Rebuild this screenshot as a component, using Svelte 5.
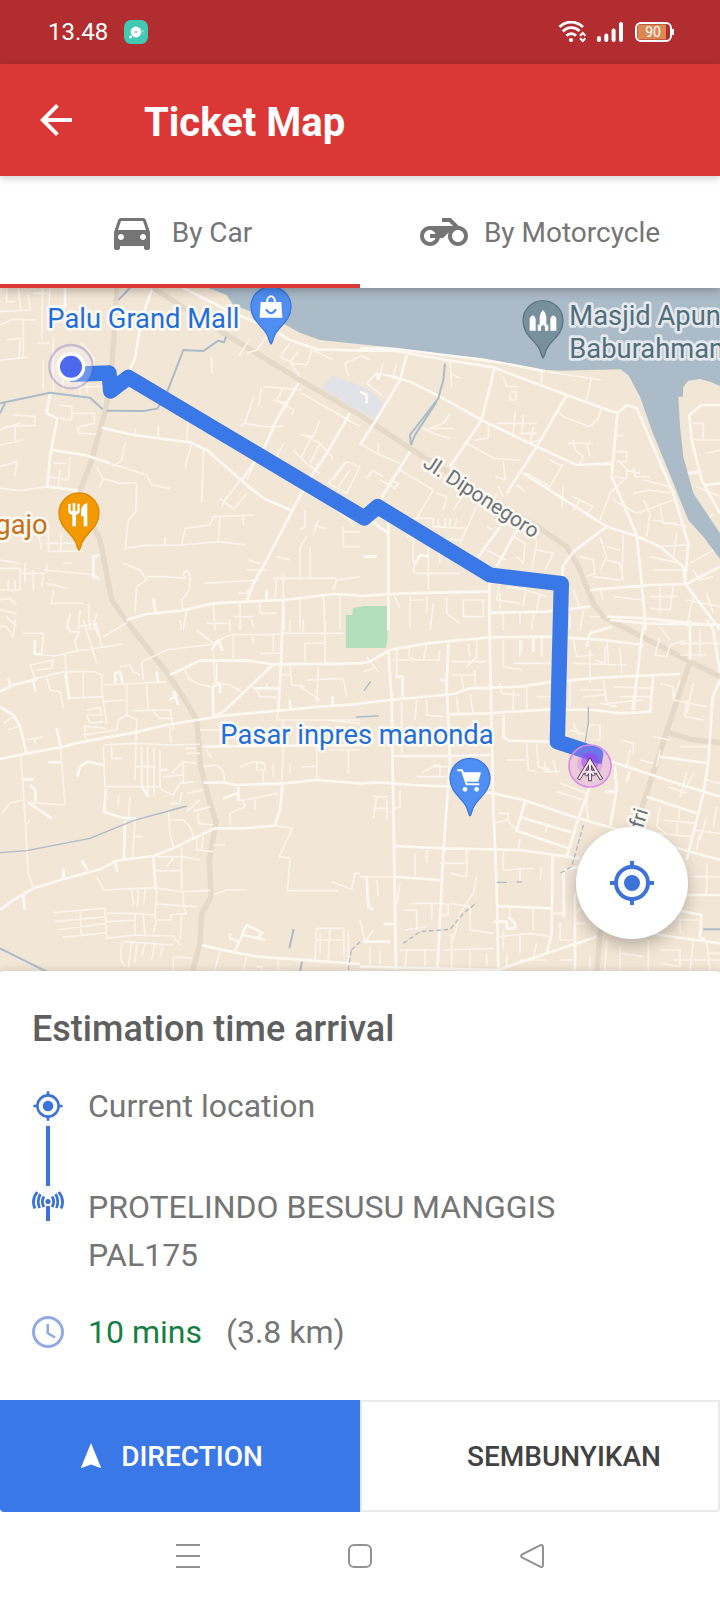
<script lang="ts">
	type Mode = 'car' | 'motorcycle';

	let mode: Mode = $state('car');

	const pin = 'M0 112C-5 108-5 97-11 85C-25 57-60 42-60 0A60 60 0 0 1 60 0C60 42 25 57 11 85C5 97 5 108 0 112Z';
	const target = 'M12 8a4 4 0 1 0 0 8 4 4 0 0 0 0-8zm8.94 3A8.99 8.99 0 0 0 13 3.06V1h-2v2.06A8.99 8.99 0 0 0 3.06 11H1v2h2.06A8.99 8.99 0 0 0 11 20.94V23h2v-2.06A8.99 8.99 0 0 0 20.94 13H23v-2h-2.06zM12 19a7 7 0 1 1 0-14 7 7 0 0 1 0 14z';

	// street network, one entry per map tile
	const tiles = [
		{
			x: 0,
			y: 0,
			roads: 'M455 30L425 115L405 235L385 280M550 24L690 95L800 140L870 180L950 208L1080 212M150 340L140 400L172 415L150 530L142 620L235 632M155 510L255 525L330 550M305 443L400 465L570 487L620 510L720 597L790 655L877 692M895 310L830 420L790 510L727 597M1050 400L980 520L920 610L877 692L800 840L760 910L740 965M380 1020L440 1002L545 992L640 970L740 965L850 960L1000 942L1080 947M850 960V1050M300 825L280 830V890L298 895M460 955L467 1000M800 930V960M195 24V80H160',
			lanes: 'M20 24V65H45M0 95L90 90L85 45M55 24L62 90M100 40H150M128 24L125 175M150 24L145 120M0 135L40 118L110 120M20 180L60 175L58 235M70 120V230M0 240L85 232M110 190H150M130 240V330M160 170V335M190 330V300M240 300V355M262 310V340M245 190L282 235L280 260M225 320H330M40 405L105 410V437H70L15 440M0 450L60 430M45 440V490M0 495L70 480M0 560L50 545L45 590M0 625L60 632L142 620M175 375L215 380V420L180 415M215 400L283 400V430L235 440V460L290 462M160 550H200M180 570L175 625M210 530L205 600M140 590L205 600M330 550L440 585L455 615L510 625M310 595L360 610L410 608M375 490L365 540L340 560M290 560L310 600L295 625M405 445V465M475 435V475M565 400L560 487M575 490L555 565M610 510L605 670M635 230V280M640 410V435M410 610L408 695L385 720L375 810M375 805L430 797L545 795L655 785M495 770V795M545 795L555 745L630 735L640 710L760 705M660 710L655 785L740 795M730 710V735M750 175L715 230M800 170L770 210L740 220M870 190L840 230L880 250L920 255L935 215M895 215L870 245L900 290M1080 230L1035 250L1045 290M1000 240L950 215L930 210M790 320L850 325L905 330M785 320L775 380M850 325L830 360L880 390L875 405M905 340L1080 440M760 350L735 430L720 440M735 430L790 440L850 440M865 370L820 360M960 420L940 470L900 465M910 465L960 490L1000 535M880 510L920 550L960 580M850 490L830 530L860 560M935 470L905 530M960 490L930 550M1035 545L985 610L1040 640L1080 560L1040 545L1000 600M1050 570L1015 620M920 640L980 670L1050 720L1060 740M915 690V740L900 750M955 720L940 765M940 735L975 745M1030 740V800H1080M1025 755H1080M920 770L900 800V890M930 800V890M870 840L830 830M745 840L780 850M740 870H800M1000 930L1010 900L1080 890M820 895H1010M850 880V960M830 890L825 960M610 910L780 900M770 900L740 940M715 940H745M660 655L705 690M680 650L665 680M740 640L700 690M720 600L670 670M770 640L740 620M760 560L740 600M145 740V815M185 760L180 815M150 815L250 812M110 740L125 810M140 790H255M190 850H215M0 865H60V930H0M75 850V910M100 870V930M60 880H130L125 920M25 900V930M45 900V930M0 840L60 850M130 870L290 885M140 850V880M140 910L200 925M160 930L155 970M150 970H250M210 1000L200 1050M240 990L235 1050M265 970L270 1050M290 1000L280 1050M370 850L420 870L440 900L410 920L405 1000M440 890H500L555 895L550 880L560 872L570 885L568 930L545 960L548 990M560 990L550 1050M640 970L645 1050M720 970V1050M780 965V1000M900 955V1050M970 945L975 1050M1020 950V1050M780 1000H830M700 1010H760M620 1030H690M0 960L30 955L50 975M0 990L50 1000M20 1010L50 1040'
		},
		{
			x: 1080,
			y: 0,
			roads: 'M0 212L100 212L260 240L400 262L500 300L620 345L772 400M0 205L100 205L260 225L440 250L555 275M140 225L120 300L45 425L0 495M80 285L150 305L240 350L365 420L530 500L650 555L755 550M405 260L365 420L270 560M620 345L530 500L440 640M470 750L410 860M355 830L420 740M150 515L60 660M772 400L755 590L830 765L850 960L857 1050M772 400L800 375L830 385L940 640L985 790L975 910L1080 1050M490 580L740 740L830 768L900 800L970 860L975 910M740 740L640 815L608 860V890M690 930L870 915L980 912L1080 860M390 998L560 995L690 980M0 948L130 940L385 935M85 730V1050M388 905V1050M1080 375H1025L988 405L995 480L1025 600L1080 700M980 580L1025 575M1040 615L1080 610M740 1010L860 1015L1000 1030L1080 1035M0 335L20 345V370M50 275L55 300M30 720L85 760M10 830H50M165 850L180 825L205 830',
			lanes: 'M30 240L0 225M20 310L50 280L100 290L110 250M70 250L55 300M20 310L70 350M270 245L275 320M270 280L300 295M430 290L440 320H475M450 340V360H468V335H450M545 275V310M560 275L725 300M695 290L680 360M590 390L610 410L690 440L715 415L725 380M465 395L460 460M410 430H530M490 405L485 460L530 460M520 440L510 490L535 480M625 490H700M640 480L645 510L670 530L660 550M680 490L690 530M570 540L610 560M610 550L570 620L500 580M270 400L250 430L210 445H280M180 440L220 460L270 475M320 490L400 535L480 540M430 545L435 600L405 590M385 430V475L345 480M0 490L50 520L120 550M55 490V520M40 570L20 595M35 570L70 590M120 570L220 630L170 715M90 600L115 610L105 625L60 600M230 640L260 650L250 690M300 660L280 690M350 680L300 790M410 640L390 700M415 620L430 650M470 615L495 635M145 715H220V740L320 745M235 715V745M255 715V745M270 715V745M290 715L285 745M140 770L310 780M160 730V850M205 790V930M165 850L160 880M235 790L240 850M160 880H300M380 740L400 750M380 810L440 840M460 770L495 790L490 850L470 830M520 760L530 790L515 870M530 810L580 820L555 870M610 620L605 680M640 650L700 680L680 700M660 660L640 690M720 720L750 640L790 600M760 590L800 595V570L780 545M770 515H800V545H770M790 465L760 470M800 570L840 580M820 560L825 590H870M820 640L870 630L930 640M850 600L930 620M760 660L830 700L940 660M850 660L870 700M880 720L980 740M900 680L910 730L950 730M860 770L870 700M890 800L980 795M950 760L940 830M790 765L785 900M720 770L740 830L720 870M660 830L700 840L705 880L680 890M740 800L780 810M870 830L960 850M880 870L970 870M740 840L780 850L790 900M700 890L780 900M1000 430H1030V480M1000 480H1080M1040 520L1080 510M1010 620L1080 650M1020 750L1060 700M990 850L1080 800M1000 870L1020 905M1020 900L1060 890M640 930L660 980M720 930L730 960M760 950L850 960M870 950H950M900 920V1000M940 920L930 990L870 985M980 960L1080 980M1000 950L980 1040M1040 940L1060 1000M420 900L410 960L480 970M440 920L500 930L560 950M500 900L490 980M540 940L530 990M420 940V990M310 960H370V1010H310ZM200 1000V950M260 950V1000L300 1030M100 940L120 985M150 950V1040M150 960H190M220 970L210 1050M430 1000V1050M480 1000V1030M520 1000L515 1050M630 1000V1050M670 990L660 1050M690 1010H720'
		},
		{
			x: 0,
			y: 1020,
			roads: 'M510 165L600 122L745 122L820 133L950 132L1080 130M848 0L843 130L835 270M820 133L670 275L640 290M0 417L80 400L180 382L240 367L400 338L500 315L590 300L680 286L835 272L960 260L1080 252M0 260L40 285L60 320L80 400M0 215L40 195L110 178M640 290L638 200L660 190V220M610 380L760 378L1080 375M610 488H680L705 495L850 490L950 480L1080 490M848 490L840 570L825 617L730 625L645 625L590 650L520 685L460 708L350 722L300 748L200 775L100 805L40 840L0 870M318 505L312 575L360 592L410 597M375 600L372 715M460 710L467 810M605 975L660 988L770 1010L940 1022L1080 1032M105 60L104 102H125M345 190V160L360 155L368 190M635 90L655 60L668 92M196 160L208 235M170 325L182 382M232 470L240 440L262 425L310 435M85 548L155 595M90 495L106 510V545M425 500L447 530M480 450H502M508 240L530 225L520 215L535 255M760 205H835M715 500V540H730M670 535L715 518M706 990L740 915L787 938L770 955M728 945L797 960M690 940V955L715 965M190 745V775M245 720L262 750M345 722L352 755M70 825L74 870M145 427H182M65 478H100M25 175L32 200M100 180L106 215M470 155L475 190M868 240L872 270M998 230V255',
			lanes: 'M70 40H130L125 105L165 108L220 95L370 72M90 135L105 175L195 155L285 155L305 165V210L320 310M90 135L160 120L155 145L110 150M195 100L205 235L310 230M250 160V235M140 170L150 210L180 215L190 265M200 0L210 35H240L225 60L230 90M240 20L290 10L305 80M250 0L290 130M280 0L295 50M380 8L310 50M430 180L425 125L500 90L640 72M360 140L390 135L400 155L420 165M310 195L380 192L500 185M380 195V285L410 300L405 480M440 195L445 270M305 245L380 240M400 272L515 270M510 270L520 330M455 270L480 295H520M260 270L300 262L305 285H260L270 310L310 305M250 318L320 325M250 345L350 330L355 300L380 285M255 320V355M555 150L565 175L590 190L630 200M660 190L690 195L730 218M640 100L645 190M590 30L640 70L690 45L850 42M700 40V115M755 40L760 70M820 40V95M780 100H840M690 0V35M755 0L760 20M540 0L545 30M850 40H1030M870 0V40M910 0V35M975 0V130M915 130V70H975M870 135L875 195L915 200M848 165H875M920 180L1030 175M1030 175L1040 230M900 200L960 240M955 140L950 250M770 210L780 230L830 232M800 190V205M650 130V190M600 330H660M835 275L830 300H1080M850 300L845 375M980 300L1080 310M10 310L40 290M25 330L55 320M80 360L130 350M105 355V370M62 410L68 480L80 680L85 760L100 805M75 615L90 600M182 385L195 555L85 548M5 580L30 550L65 540M310 380L315 500L480 500M335 370V415H365M310 375L400 370L515 375L600 372M405 440H465M425 380V500M443 380V525M462 380V530M480 390V500M510 320L512 370M480 500L485 510L520 525L540 490L550 485V425L590 430M515 460L550 425M490 470L550 465M560 400H600M555 385H590M545 490L580 485M560 520L610 510M580 575L630 560M560 575L600 540M595 580V610L640 615M505 570L510 640L520 680M505 600H550L570 620L580 650M510 550L540 550L545 515M620 390L635 415M610 440L650 435L670 455L675 485M720 440L760 425L795 430V450H770V425M790 450V495M850 380L845 490M820 430V470M870 430V460M905 440H950V380M950 440V480M985 390H1080M1045 390V460M690 615V580L735 560L728 540M735 540L835 520M765 540V570M830 617L877 625L838 710L870 715L862 812H1015M995 785L1055 808L1065 760H1080M640 825L680 810H740M640 675H675M590 650V690L640 695M610 650L605 690M545 680L545 810M460 752H545M470 710H545L600 720M500 740L520 715M398 715L405 600M355 525V560M390 530L385 600M400 650H430M290 770L310 810L460 803L545 815L632 812M395 805L400 855M415 805L412 860M435 805L432 850M470 810L465 900M470 852L590 860M550 815V860L560 880L510 885L515 900H470M160 877L315 865L320 955L405 945V880L320 880M165 905L320 890M170 930L320 910M188 952L320 938M240 875L245 950M320 905L405 900M405 880L465 885M430 885L435 950M405 945L520 948L540 975M545 885L540 960M365 965L362 1020L375 1040M370 965L520 975M395 965L385 1040M410 970L405 1030M435 970L425 1010M465 970L455 1020M490 970L480 1010M525 1010L575 1015M520 1010V1050M460 940L470 900M945 1020L950 925H1032V1010M990 925L985 1018M960 940V1000M950 960H1030M1045 930V1030M660 990L645 1050M740 1010L730 1050M770 1040H785V1050M835 1015V1050M20 20L40 50L45 0M0 20H20'
		},
		{
			x: 1080,
			y: 1020,
			roads: 'M0 130L30 125L90 90L200 70L390 52L570 50L730 60L850 75M0 250L90 240L280 222L330 205L480 200L580 185L730 172L960 162M85 90L95 240L100 560L108 1050M388 0L400 560L410 800L415 1050M265 70L260 200L270 420L250 700L232 1050M270 283L380 280L570 268L700 270L780 280L870 275L880 165M432 285L430 350L445 362L570 365M95 408L270 408L390 405M0 490L60 487L160 495L270 500L400 520L490 540L640 590L760 625L900 670L1080 720M755 425L860 460L950 490L1080 530M100 678L250 685L480 690L660 715M690 500L650 610L622 705M495 545L470 632L625 685M482 592L633 637M680 80L690 40L755 20M855 0L845 50L820 270M800 485L810 455M765 440L770 510L750 620M860 530L1010 580M900 410L1045 430M1080 180L1058 230L1045 430L1030 520L980 720M1040 0L1060 30L1080 160M750 0L860 10L1060 15M990 0V120M0 1040L220 1045L415 1050L560 1000L710 950M610 750L660 740M610 750L612 890M578 705L575 940L560 1000M410 858L575 865M100 770L240 780M735 515H765M645 820V1050M845 930L900 945L1080 970M20 770L25 860L40 870M400 905H440V925H465V905M70 912H105M10 965H90M920 865L1025 885L1020 950L1035 960M980 825H1080M105 170H128V230M240 180H258V195M520 50V95M445 890L465 910',
			lanes: 'M20 110L55 155M10 155L40 145M95 120H240M110 80V165M150 80L145 110L170 120M200 75L190 120M240 90L235 125M275 125H380M325 70L330 110M350 60V110L320 140M345 150V205M305 165L310 210M275 165H350M290 230L295 280M330 225L340 280M200 240V285L250 290M125 245V400M170 240L165 300M100 330L165 335M430 60V140L485 150M460 130H570M485 60V95M545 55V110M480 110V60M420 190L425 220L480 225M500 200V270M460 210V270M530 230H570M640 60L650 110L700 105M640 130L800 135M740 60L745 130M705 120L735 130V80M780 80L785 160M690 90V190M630 180V260M730 180L740 250L850 240M830 165L815 270M660 210H730M670 230L740 225M720 250L770 260M760 200L880 205M780 230H880M900 50L885 105L920 110L930 75L980 60M900 190L940 200V240L1040 260M980 240L975 290L1030 300M1000 190L980 280M940 240L960 180M960 70L1080 70M960 105H1040M1020 30V110M900 20L930 60M630 330L680 345L690 315H720V360H700M640 310L660 350M500 370L505 450L530 455M530 370L535 440L570 450M440 420H500M580 420L590 460M555 425V455H600M220 435H240V470M190 455L220 440H265M170 470H260M300 430V500M340 410V490M600 490L680 520M590 515L670 540M680 520V560L685 600M120 510V560L105 565M50 530L40 595M40 530H85M40 565H85M80 540V600M400 610L440 600L470 630M415 580H445V605M560 610L558 635M480 655L475 690M840 420L880 430M880 350L930 360M810 390L800 440M780 360L820 370V400M960 380H1045M900 390L890 440M980 455L960 530M1000 460L975 510M925 500L980 520M1040 480L1080 490M900 560L890 620L920 640M910 600L1010 610M960 560L950 640M1000 630L1080 640M1040 590L1020 660M1070 560L1060 620M1020 640L1010 690M890 640L1000 650M200 690V730M165 700V770M320 690V770L270 760M240 730H320M430 690V750L520 745M545 740L540 780M480 740V790M350 770L340 820L300 880L280 960M0 770H100M50 780L55 830M150 850L240 850M130 870H170V930M135 930L200 920M245 850L265 855V885H245M270 850L330 860V930L400 940M215 850V900M450 860V900M520 865V930M415 950L510 940L575 950M430 930V990M480 940V1000M530 970L520 1010M0 900L15 965L40 930M120 790L110 850M615 880H580M645 910H675M645 880L670 860M600 960H640M600 905V960M250 990L400 985M275 940V1050M330 985V1050M380 1000V1040M120 990H230M140 990L135 1040M195 990V1040M30 980V1040M60 990V1040M440 1000V1040M480 1020L560 1020M600 1020H640M690 1010V1050M740 960L735 1050M780 980V1050M780 1000L850 1010M865 960V1050M900 990H960V1040L900 1030M1000 960L990 1050M1040 1000H1080M1040 960L1050 1050M940 1020H1080M1000 770H1080M1040 730V820M960 870V940M910 900H1020'
		}
	];
</script>

<div class="screen">
	<div class="status-bar">
		<span class="clock">13.48</span>
		<svg class="status-app" viewBox="0 0 24 24" aria-hidden="true">
			<rect width="24" height="24" rx="7" fill="#41c9b4" />
			<circle cx="12" cy="12" r="5.4" fill="#fff" />
			<circle cx="12" cy="12" r="1" fill="#41c9b4" />
			<circle cx="6.6" cy="17" r="1.4" fill="#fff" />
			<path d="M19 10v2M19 13.5v1" stroke="#b9f0e6" />
		</svg>
		<div class="status-icons">
			<svg width="28" height="22" viewBox="0 0 28 22" fill="none" stroke="#fff" stroke-width="2.8" aria-hidden="true">
				<path d="M1.500 6C8-.6 18-.6 25 6M4.800 10.500C9.500 5.500 17 5.500 21.500 10M8.500 14.800C11 12 15.500 12 18 14.800" />
				<circle cx="13" cy="19" r="2.100" fill="#fff" stroke="none" />
				<path d="M22 14.800L24.800 12L27.500 14.800M22 17.200L24.800 20L27.500 17.200" stroke-width="2" />
			</svg>
			<svg width="28" height="22" viewBox="0 0 28 22" stroke="#fff" stroke-width="4" stroke-linecap="round" aria-hidden="true">
				<path d="M3 17v2M10.300 14.500v4.500M17.600 9.500v9.500M25 3v16" />
			</svg>
			<svg width="40" height="22" viewBox="0 0 40 22" aria-hidden="true">
				<rect x="2" y="2" width="35" height="18" rx="5" fill="none" stroke="#fff" stroke-width="2" />
				<path d="M6 3.500H32V18.500H6Q3.500 18.500 3.500 15V7Q3.500 3.500 6 3.500Z" fill="#dc8853" />
				<path d="M39 8v6" stroke="#fff" stroke-width="2" />
				<text class="battery-level" x="19" y="16" text-anchor="middle">90</text>
			</svg>
		</div>
	</div>

	<header class="app-bar">
		<button class="back" aria-label="Back">
			<svg viewBox="0 0 24 24" fill="currentColor"><path d="M20 11H7.830l5.590-5.590L12 4l-8 8 8 8 1.410-1.410L7.830 13H20v-2z" /></svg>
		</button>
		<h1>Ticket Map</h1>
	</header>

	<div class="tabs" role="tablist">
		<button class="tab" class:tab--active={mode === 'car'} role="tab" aria-selected={mode === 'car'} onclick={() => (mode = 'car')}>
			<svg viewBox="0 0 24 24" fill="currentColor" aria-hidden="true">
				<path d="M18.920 6.010C18.720 5.420 18.160 5 17.500 5h-11c-.66 0-1.210.42-1.420 1.010L3 12v8c0 .55.45 1 1 1h1c.55 0 1-.45 1-1v-1h12v1c0 .55.45 1 1 1h1c.55 0 1-.45 1-1v-8l-2.080-5.990zM6.500 16c-.83 0-1.500-.67-1.500-1.500S5.670 13 6.500 13s1.500.67 1.500 1.500S7.330 16 6.500 16zm11 0c-.83 0-1.500-.67-1.500-1.500s.67-1.500 1.500-1.500 1.500.67 1.500 1.500-.67 1.500-1.500 1.500zM5 11l1.500-4.500h11L19 11H5z" />
			</svg>
			By Car
		</button>
		<button class="tab" class:tab--active={mode === 'motorcycle'} role="tab" aria-selected={mode === 'motorcycle'} onclick={() => (mode = 'motorcycle')}>
			<svg viewBox="0 0 24 24" fill="currentColor" aria-hidden="true">
				<path d="M19.440 9.030L15.410 5H11v2h3.590l2 2H5c-2.800 0-5 2.200-5 5s2.200 5 5 5c2.460 0 4.450-1.690 4.900-4h1.650l2.770-2.770c-.21.54-.32 1.140-.32 1.770 0 2.800 2.200 5 5 5s5-2.200 5-5c0-2.650-1.970-4.770-4.560-4.970zM7.820 15C7.400 16.150 6.280 17 5 17c-1.630 0-3-1.370-3-3s1.370-3 3-3c1.280 0 2.400.85 2.820 2H5v2h2.820zM19 17c-1.660 0-3-1.340-3-3s1.340-3 3-3 3 1.340 3 3-1.340 3-3 3z" />
			</svg>
			By Motorcycle
		</button>
	</div>

	<main class="map">
		<svg class="map__canvas" viewBox="0 24 2160 2061" role="img" aria-label="Route map">
			<rect y="24" width="2160" height="2061" fill="#f2e6d6" />
			<path fill="#e2e3e8" d="M965 325L998 287L1085 318L1120 340L1152 372L1128 418L1080 395Z" />
			<path fill="#b3dfbf" d="M1038 1005H1058V985L1095 978H1163V1075L1158 1104H1038Z" />

			<g class="highway">
				<path d="M350 24L344 140L335 260L318 385L275 540L240 632L262 700L300 780L320 880L335 960L370 1010L400 1050L510 1190L555 1260L590 1320L602 1460L630 1570L648 1625L628 1740L633 1850L605 1900L600 1990L575 2085" />
				<path d="M460 24L640 140L900 300L1080 405L1230 505L1380 600L1620 745L1700 800L1735 860L1780 970L1810 1010L2070 1145L2160 1190" />
				<path d="M2070 1145L2000 1355L1930 1570L1800 1960L1790 2085M2000 1355L2070 1378L2160 1388" />
			</g>

			{#each tiles as tile}
				<g transform="translate({tile.x} {tile.y})">
					<path class="lane" d={tile.lanes} />
					<path class="road" d={tile.roads} />
				</g>
			{/each}

			<path fill="#acbbc8" d="M625 24L680 45L700 75L755 95L840 125L900 158L960 180L1080 193L1200 205L1340 222L1450 235L1560 255L1640 270L1680 272L1860 268L1885 285L1920 350L1955 450L2000 560L2065 720L2110 770L2160 836V760L2080 640L2050 530L2040 440L2035 350H2048L2050 320L2065 302L2100 297L2130 305L2160 318V24Z" />
			<g class="stream">
				<path d="M0 370L150 338L270 353L308 388M320 392L430 393L472 386L500 340L550 210L610 213L655 182L672 187L678 170M0 400L15 370M390 24L355 60" />
				<path d="M1335 250L1330 300L1315 355L1230 465L1233 495L1245 465L1310 365" />
				<path class="stream--thin" d="M0 1718L80 1712L270 1675L400 1622L560 1578M1068 1311L1136 1308M1092 1232L1112 1204M1765 1280V1330L1755 1390M1490 1807H1520M1550 1806H1565" />
				<path class="stream--thin stream--dashed" d="M1210 1990L1260 1955L1350 1948L1390 1900L1430 1868M1750 1635L1715 1760L1680 1780M1054 2010L1080 1985M1045 2070L1054 2010" />
				<path d="M0 2005L140 2075M881 1948L868 2005M906 2045L898 2085M2110 1948H2160" />
			</g>

			<path class="route" d="M210 283L327 279L332 333L385 292L1093 714L1133 680L1470 885L1684 911L1672 1385L1787 1423L1782 1448" />

			<circle cx="213" cy="260" r="65" fill="rgba(250, 245, 255, .25)" stroke="rgba(100, 90, 180, .3)" stroke-width="7" />
			<circle cx="213" cy="260" r="43" fill="#fff" />
			<circle cx="213" cy="260" r="33" fill="#4c69ee" />

			<g transform="translate(813 80)">
				<path d={pin} fill="#4f8ff3" stroke="#3b78df" stroke-width="4" />
				<path d="M-31-14H31L34 33H-34Z" fill="#fff" />
				<path d="M-12-12C-12-38 12-38 12-12" fill="none" stroke="#fff" stroke-width="6" />
				<path d="M-15 8Q0 32 15 8" fill="none" stroke="#4285f4" stroke-width="6" />
			</g>
			<g transform="translate(237 699)">
				<path d={pin} fill="#f29900" stroke="#e08600" stroke-width="4" />
				<path d="M-32-28V-6Q-32 4-20 5V40H-9V5Q2 4 2-6V-28H-5V-6H-11V-30H-19V-6H-25V-28ZM25-30Q6-24 6-4V10H14V40H25Z" fill="#fff" />
			</g>
			<g transform="translate(1629 122)">
				<path d={pin} fill="#788f9c" stroke="#5c7784" stroke-width="4" />
				<path d="M-40 30V-4Q-40-12-30-16Q-22-12-22-4V30ZM22 30V-4Q22-12 30-16Q40-12 40-4V30ZM-16 30V12H-10V-12Q-10-22 0-32Q10-22 10-12V12H16V30H6V18Q0 8-6 18V30Z" fill="#fff" />
			</g>
			<g transform="translate(1410 1495)">
				<path d={pin} fill="#4f8ff3" stroke="#3b78df" stroke-width="4" />
				<path d="M-38-24H-24L-10 18H28" fill="none" stroke="#fff" stroke-width="6" />
				<path d="M-24-18H33L25 10H-13Z" fill="#fff" />
				<circle cx="-15" cy="33" r="7" fill="#fff" />
				<circle cx="20" cy="33" r="7" fill="#fff" />
			</g>

			<g transform="translate(1770 1458)">
				<circle r="63" fill="rgba(222, 130, 235, .28)" stroke="#da8de8" stroke-width="5" />
				<circle cy="-6" r="38" fill="rgba(176, 64, 240, .2)" />
				<circle cy="-12" r="26" fill="rgba(160, 60, 245, .5)" />
				<g fill="none" stroke-linecap="square">
					<path d="M-32 36L0-16L32 36M0-16V40M-17 17H17M-10 24L0 12L10 24" stroke="#55474f" stroke-width="11" />
					<path d="M-32 36L0-16L32 36M0-16V40M-17 17H17M-10 24L0 12L10 24" stroke="#f3e4ee" stroke-width="6" />
				</g>
			</g>

			<g class="label label--shop">
				<text x="142" y="143">Palu Grand Mall</text>
				<text x="661" y="1393">Pasar inpres manonda</text>
			</g>
			<text class="label label--food" x="143" y="763" text-anchor="end">gajo</text>
			<g class="label label--mosque">
				<text x="1708" y="134">Masjid Apung</text>
				<text x="1708" y="234">Baburahman</text>
			</g>
			<text class="label label--street" transform="translate(1265 558) rotate(33)">Jl. Diponegoro</text>
			<text class="label label--street" transform="translate(1928 1648) rotate(-73)">fri</text>
		</svg>
		<button class="locate" aria-label="My location">
			<svg viewBox="0 0 24 24" fill="currentColor"><path d={target} /></svg>
		</button>
	</main>

	<section class="card">
		<h2>Estimation time arrival</h2>
		<div class="trip">
			<div class="trip__rail" aria-hidden="true">
				<svg viewBox="0 0 24 24" fill="currentColor"><path d={target} /></svg>
				<span class="trip__line"></span>
				<svg viewBox="0 0 32 32" fill="none" stroke="currentColor" stroke-width="2.8">
					<circle cx="16" cy="11.500" r="2.600" fill="currentColor" stroke="none" />
					<path d="M16 16v15" stroke-width="4" />
					<path d="M12 6.500Q8.600 11.500 12 17M8.400 4Q4.400 11 7.600 18M5.200 2Q-1 10 3 18.500M20 6.500Q23.400 11.500 20 17M23.600 4Q27.600 11 24.400 18M26.800 2Q33 10 29 18.500" />
				</svg>
			</div>
			<div class="trip__stops">
				<p>Current location</p>
				<p>PROTELINDO BESUSU MANGGIS PAL175</p>
			</div>
		</div>
		<div class="eta">
			<svg viewBox="0 0 32 32" fill="none" stroke="currentColor" aria-hidden="true">
				<circle cx="16" cy="16" r="14.500" stroke-width="3" />
				<path d="M15.700 8V17L23 21.500" stroke-width="2.600" />
			</svg>
			<span class="eta__time">10 mins</span>
			<span>(3.8 km)</span>
		</div>
	</section>

	<div class="actions">
		<button class="action action--direction">
			<svg viewBox="0 0 20 26" fill="currentColor" aria-hidden="true"><path d="M10 0L20 24.500L19.500 25L10 21.500L.5 25L0 24.500Z" /></svg>
			DIRECTION
		</button>
		<button class="action action--hide">SEMBUNYIKAN</button>
	</div>

	<nav class="system-nav" aria-label="System">
		<button aria-label="Recent apps">
			<svg viewBox="0 0 24 24"><path d="M0 1H24M0 12H24M0 23H24" /></svg>
		</button>
		<button aria-label="Home">
			<svg viewBox="0 0 24 24"><rect x="1" y="1" width="22" height="22" rx="5" /></svg>
		</button>
		<button aria-label="Go back">
			<svg viewBox="0 0 24 24"><path d="M2 10.500L20.500 1.200Q23 .5 23 3V21Q23 23.500 20.500 22.800L2 13.500Q.2 12 2 10.500Z" /></svg>
		</button>
	</nav>
</div>

<style>
	:global(body) {
		background: #fff;
	}
	.screen {
		display: flex;
		flex-direction: column;
		min-height: 100vh;
		font-family: Roboto, "Liberation Sans", sans-serif;
		color: #757575;
	}
	button {
		margin: 0;
		padding: 0;
		border: 0;
		background: none;
		color: inherit;
		font: inherit;
		cursor: pointer;
	}
	svg {
		display: block;
		flex: none;
	}

	.status-bar {
		display: flex;
		align-items: center;
		height: 64px;
		padding: 0 46px 0 48px;
		background: #b12d2f;
		color: #fff;
	}
	.clock {
		font-size: 24px;
	}
	.status-app {
		width: 24px;
		height: 24px;
		margin-left: 16px;
	}
	.status-icons {
		display: flex;
		gap: 10px;
		margin-left: auto;
	}
	.battery-level {
		font-size: 14px;
		fill: #fff;
	}

	.app-bar {
		position: relative;
		z-index: 2;
		display: flex;
		align-items: center;
		gap: 64px;
		height: 112px;
		padding: 0 32px;
		background: #db3736;
		color: #fff;
		box-shadow: 0 2px 8px rgba(0, 0, 0, .2);
	}
	.back svg {
		width: 48px;
		height: 48px;
	}
	h1 {
		margin: 0;
		padding-top: 4px;
		font-size: 40px;
		font-weight: 700;
	}

	.tabs {
		position: relative;
		z-index: 1;
		display: flex;
		background: #fff;
		box-shadow: 0 2px 10px rgba(0, 0, 0, .3);
	}
	.tab {
		display: flex;
		flex: 1;
		align-items: center;
		justify-content: center;
		gap: 16px;
		height: 112px;
		box-sizing: border-box;
		border-top: 4px solid transparent;
		border-bottom: 4px solid transparent;
		font-size: 28px;
	}
	.tab--active {
		border-bottom-color: #db3736;
	}
	.tab svg {
		width: 48px;
		height: 48px;
	}

	.map {
		position: relative;
	}
	.map__canvas {
		width: 100%;
	}
	.highway path {
		fill: none;
		stroke: #e5d9c9;
		stroke-width: 16;
		stroke-linejoin: round;
	}
	.road,
	.lane {
		fill: none;
		stroke: #fdf9f2;
		stroke-width: 8;
		stroke-linejoin: round;
	}
	.lane {
		stroke: #fbf5ec;
		stroke-width: 5;
	}
	.stream {
		fill: none;
		stroke: #acbbc8;
		stroke-width: 6;
	}
	.stream--thin {
		stroke-width: 4;
	}
	.stream--dashed {
		stroke-dasharray: 14 8;
	}
	.route {
		fill: none;
		stroke: #3b78e7;
		stroke-width: 46;
		stroke-linejoin: round;
	}
	.label {
		font-size: 82px;
		stroke: #fcf8f2;
		stroke-width: 16;
		stroke-linejoin: round;
		paint-order: stroke;
	}
	.label--shop {
		fill: #1f6fdb;
	}
	.label--food {
		fill: #c7701b;
	}
	.label--mosque {
		fill: #546e7a;
		stroke: #e3e9ee;
	}
	.label--street {
		font-size: 62px;
		fill: #6b7177;
	}
	.locate {
		position: absolute;
		right: 32px;
		bottom: 36px;
		display: grid;
		place-items: center;
		width: 112px;
		height: 112px;
		border-radius: 50%;
		background: #fff;
		color: #3d72d6;
		box-shadow: 0 6px 16px rgba(0, 0, 0, .25);
	}
	.locate svg {
		width: 48px;
		height: 48px;
	}

	.card {
		position: relative;
		margin-top: -4px;
		padding: 34px 32px 44px;
		border-radius: 4px 4px 0 0;
		background: #fff;
		box-shadow: 0 -2px 6px rgba(0, 0, 0, .1);
		font-size: 32px;
		line-height: 48px;
	}
	h2 {
		margin: 0 0 29px;
		color: #5f5f5f;
		font-size: 36px;
		font-weight: 500;
	}
	.trip {
		display: flex;
		gap: 24px;
		margin-bottom: 29px;
	}
	.trip__rail {
		display: flex;
		flex-direction: column;
		align-items: center;
		gap: 4px;
		padding-top: 8px;
		color: #3d72d6;
	}
	.trip__rail svg,
	.eta svg {
		width: 32px;
		height: 32px;
	}
	.trip__line {
		width: 4px;
		height: 60px;
		background: #3d72d6;
	}
	.trip__stops {
		display: flex;
		flex-direction: column;
		gap: 53px;
		max-width: 520px;
	}
	p {
		margin: 0;
	}
	.eta {
		display: flex;
		align-items: center;
		gap: 24px;
	}
	.eta svg {
		color: #8eabe4;
	}
	.eta__time {
		color: #158043;
	}

	.actions {
		position: relative;
		display: grid;
		grid-template-columns: 1fr 1fr;
		background: #fff;
	}
	.action {
		display: flex;
		align-items: center;
		justify-content: center;
		gap: 20px;
		height: 112px;
		box-sizing: border-box;
		font-size: 28px;
		font-weight: 500;
	}
	.action svg {
		width: 20px;
		height: 26px;
	}
	.action--direction {
		padding-right: 16px;
		border-bottom-left-radius: 4px;
		background: #3b78e7;
		color: #fff;
	}
	.action--hide {
		padding-left: 48px;
		border: 2px solid #eaeaea;
		border-left-color: #dceafd;
		border-bottom-right-radius: 4px;
		color: #424242;
	}

	.system-nav {
		display: flex;
		align-items: center;
		justify-content: center;
		gap: 148px;
		height: 88px;
		background: #fff;
	}
	.system-nav svg {
		width: 24px;
		height: 24px;
		fill: none;
		stroke: #919191;
		stroke-width: 2;
	}
</style>
